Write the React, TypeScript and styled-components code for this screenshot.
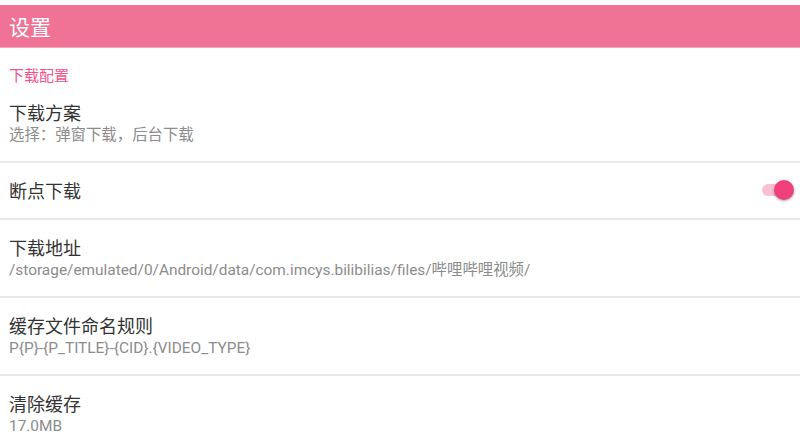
import React from 'react'
import styled, { createGlobalStyle } from 'styled-components'

const GlobalStyle = createGlobalStyle`
  html, body {
    margin: 0;
    padding: 0;
    background: #ffffff;
  }
  body {
    font-family: Roboto, 'Noto Sans CJK SC', sans-serif;
    -webkit-font-smoothing: antialiased;
  }
`

const Page = styled.div`
  width: 800px;
  height: 448px;
  overflow: hidden;
  padding-top: 5px;
  box-sizing: border-box;
  background: #fff;
`

const Toolbar = styled.div`
  height: 42px;
  background: #f07396;
  border-bottom: 1px solid #f6a7bd;
  display: flex;
  align-items: center;
  padding: 0 9px;
  color: #ffffff;
  font-size: 21px;
  font-family: 'Noto Sans CJK SC', sans-serif;
`

const Category = styled.div`
  padding: 18px 9px 2px;
  line-height: 17px;
  height: 17px;
  font-size: 15px;
  color: #f0558a;
  font-family: 'Noto Sans CJK SC', sans-serif;
`

const Row = styled.div<{ last?: boolean }>`
  display: flex;
  align-items: center;
  padding: 15px 9px ${({ last }) => (last ? '0' : '16px')};
  border-bottom: ${({ last }) => (last ? 'none' : '2px solid #e8e8e8')};
`

const RowText = styled.div`
  flex: 1;
  display: flex;
  flex-direction: column;
`

const Title = styled.div`
  font-size: 18px;
  line-height: 24px;
  color: #333333;
  font-family: 'Noto Sans CJK SC', sans-serif;
`

const Summary = styled.div`
  margin-top: 1px;
  font-size: 15.4px;
  line-height: 20px;
  color: #8c8c8c;
`

const SwitchTrack = styled.div<{ on: boolean }>`
  position: relative;
  width: 26px;
  height: 12px;
  margin-right: 3px;
  border-radius: 6px;
  background: ${({ on }) => (on ? '#f9c0d3' : '#c8c8c8')};
`

const SwitchThumb = styled.div<{ on: boolean }>`
  position: absolute;
  top: -4px;
  left: ${({ on }) => (on ? '12px' : '-4px')};
  width: 20px;
  height: 20px;
  border-radius: 50%;
  background: ${({ on }) => (on ? '#ef3f7c' : '#f5f5f5')};
  box-shadow: 0 1px 3px rgba(0, 0, 0, 0.35);
`

interface PrefProps {
  title: string
  summary?: string
  toggle?: boolean
  last?: boolean
}

function Preference({ title, summary, toggle, last }: PrefProps) {
  return (
    <Row last={last}>
      <RowText>
        <Title>{title}</Title>
        {summary && <Summary>{summary}</Summary>}
      </RowText>
      {toggle !== undefined && (
        <SwitchTrack on={toggle}>
          <SwitchThumb on={toggle} />
        </SwitchTrack>
      )}
    </Row>
  )
}

export default function App() {
  return (
    <Page>
      <GlobalStyle />
      <Toolbar>设置</Toolbar>
      <Category>下载配置</Category>
      <Preference title="下载方案" summary="选择：弹窗下载，后台下载" />
      <Preference title="断点下载" toggle />
      <Preference
        title="下载地址"
        summary="/storage/emulated/0/Android/data/com.imcys.bilibilias/files/哔哩哔哩视频/"
      />
      <Preference title="缓存文件命名规则" summary="P{P}-{P_TITLE}-{CID}.{VIDEO_TYPE}" />
      <Preference title="清除缓存" summary="17.0MB" last />
    </Page>
  )
}
